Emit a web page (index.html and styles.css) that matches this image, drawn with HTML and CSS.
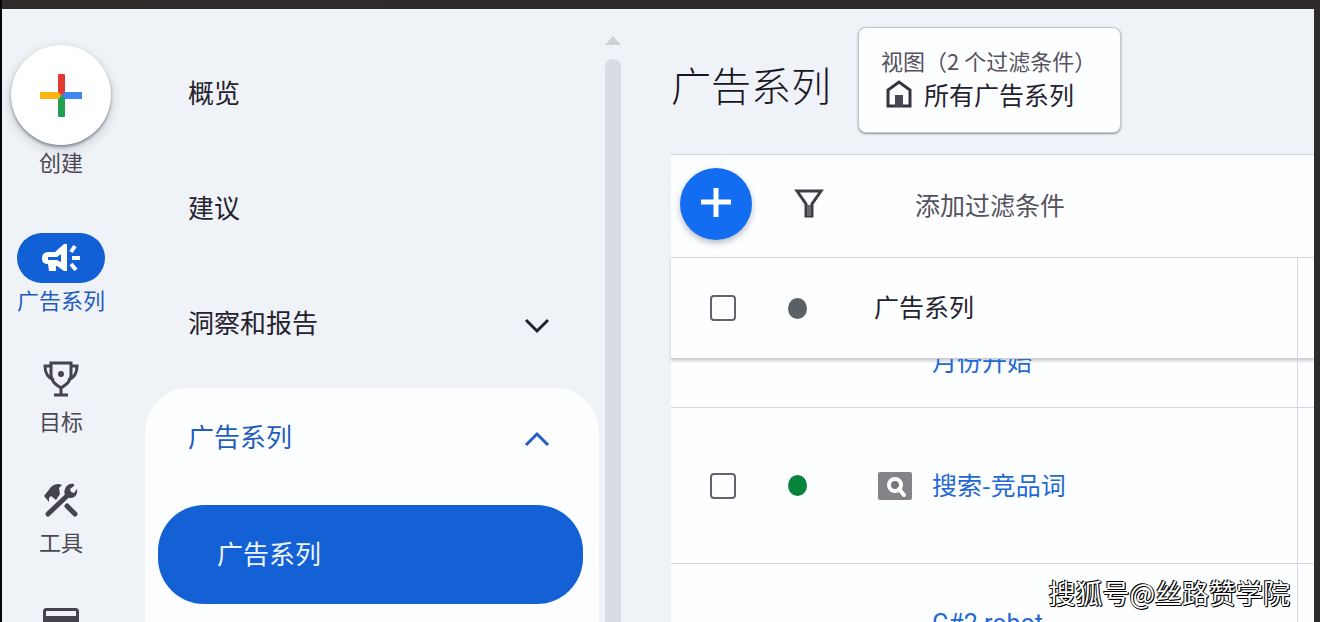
FILE: index.html
```html
<!DOCTYPE html>
<html lang="zh-CN">
<head>
<meta charset="utf-8">
<meta name="viewport" content="width=device-width, initial-scale=1">
<title>广告系列</title>
<link rel="stylesheet" href="styles.css">
</head>
<body>
<div class="app">
  <nav class="rail">
    <button class="rail-item create" type="button">
      <span class="create-disc">
        <svg width="44" height="44" viewBox="0 0 44 44"><path fill="#e23b35" d="M19 2q0-1 1-1h5q1 0 1 1v20l-7 2z"/><path fill="#fbb50f" d="M1 19h18l3 3-3 4H1z"/><path fill="#4285f0" d="M26 19h17v7H25l-3-3z"/><path fill="#20a152" d="M19 26l4-4 3 4v17q0 1-1 1h-5q-1 0-1-1z"/></svg>
      </span>
      <span class="rail-label">创建</span>
    </button>
    <a class="rail-item active" href="#">
      <span class="rail-icon pill">
        <svg width="40" height="32" viewBox="0 0 40 32"><path fill="#fff" d="M8 10h6l9-8h3v27h-3l-7-5h-1v5H8l-1-7c-4 0-6-2-6-5 0-5 2-7 7-7z"/><path fill="#1260d6" d="M7 15h9l4-3v8l-4-2H7z"/><path d="M30 10l4-6M31 16h8M30 22l5 6" stroke="#fff" stroke-width="4"/></svg>
      </span>
      <span class="rail-label">广告系列</span>
    </a>
    <a class="rail-item" href="#">
      <span class="rail-icon">
        <svg width="38" height="36" viewBox="0 0 38 36" fill="none" stroke="#45434c" stroke-width="3"><path d="M9 2h20v12c0 6-4 9-10 13C13 23 9 20 9 14z"/><path d="M9 5H3c0 8 3 12 9 14M29 5h6c0 8-3 12-9 14"/><path d="M19 26v8M12 34h14"/><circle cx="19" cy="13" r="3" fill="#45434c" stroke="none"/></svg>
      </span>
      <span class="rail-label">目标</span>
    </a>
    <a class="rail-item" href="#">
      <span class="rail-icon">
        <svg width="36" height="34" viewBox="0 0 36 34"><path fill="#45434c" d="M1 13l7-9c3-3 8-4 11-2l-3 3 1 6-4 6-5-4-2 2v4z"/><path d="M5 31L26 11M24 23l8 8" fill="none" stroke="#45434c" stroke-width="5" stroke-linecap="round"/><path d="M31 3l-4 3 1 3 3 1 3-4c1 5-2 9-6 9-5 0-8-4-6-9 1-4 5-6 9-5z" fill="#45434c"/></svg>
      </span>
      <span class="rail-label">工具</span>
    </a>
    <a class="rail-item" href="#" aria-label="结算">
      <span class="rail-icon">
        <svg width="36" height="26" viewBox="0 0 36 26"><rect x="1.500" y="1.500" width="33" height="23" rx="2" fill="none" stroke="#45434c" stroke-width="3"/><path fill="#45434c" d="M2 8h32v6H2z"/></svg>
      </span>
    </a>
  </nav>

  <nav class="menu">
    <a class="menu-item" href="#">概览</a>
    <a class="menu-item" href="#">建议</a>
    <button class="menu-item" type="button">洞察和报告
      <svg class="chevron" width="26" height="16" viewBox="0 0 26 16"><path d="M2 2l11 11L24 2"/></svg>
    </button>
    <div class="group">
      <button class="menu-item group-head" type="button">广告系列
        <svg class="chevron" width="26" height="16" viewBox="0 0 26 16"><path d="M2 14L13 3l11 11"/></svg>
      </button>
      <a class="sub-item" href="#">广告系列</a>
    </div>
  </nav>

  <div class="scrollbar">
    <svg width="16" height="9" viewBox="0 0 16 9"><path fill="#cdd0d5" d="M8 0l8 9H0z"/></svg>
    <div class="thumb"></div>
  </div>

  <main class="main">
    <header class="head">
      <h1>广告系列</h1>
      <button class="view" type="button">
        <span class="view-sub">视图（2 个过滤条件）</span>
        <span class="view-name">
          <svg width="26" height="28" viewBox="0 0 26 28"><path d="M2 26V10l11-8 11 8v16z" fill="none" stroke="#35333f" stroke-width="3"/><path fill="#4a4652" d="M9 15h8v12H9z"/></svg>
          所有广告系列
        </span>
      </button>
    </header>
    <section class="panel">
      <div class="toolbar">
        <button class="fab" type="button" aria-label="新建">
          <svg width="32" height="32" viewBox="0 0 32 32"><path d="M16 0v29M1 14h30" stroke="#fff" stroke-width="5"/></svg>
        </button>
        <svg class="funnel" width="30" height="30" viewBox="0 0 30 30"><path d="M3 2h24L18 15v12h-6V15z" fill="none" stroke="#403d47" stroke-width="3"/><path fill="#6b6870" d="M13 16h4v11h-4z"/></svg>
        <input class="filter" type="text" aria-label="添加过滤条件" placeholder="添加过滤条件">
      </div>
      <table class="grid">
        <colgroup><col class="c-check"><col class="c-dot"><col><col class="c-end"></colgroup>
        <thead>
          <tr>
            <th class="check"><input type="checkbox" aria-label="全选"></th>
            <th><span class="dot"></span></th>
            <th class="label">广告系列</th>
            <th></th>
          </tr>
        </thead>
        <tbody>
          <tr class="row-first">
            <td></td><td></td>
            <td><div class="clip"><a href="#">月份开始</a></div></td>
            <td></td>
          </tr>
          <tr class="row">
            <td class="check"><input type="checkbox" aria-label="搜索-竞品词"></td>
            <td><span class="dot on"></span></td>
            <td><div class="name">
              <svg width="34" height="28" viewBox="0 0 34 28"><rect width="34" height="28" rx="2" fill="#858387"/><circle cx="17" cy="13" r="6" fill="#77757a" stroke="#fff" stroke-width="4"/><path d="M21 17l5 6" stroke="#fff" stroke-width="4" stroke-linecap="round"/></svg>
              <a href="#">搜索-竞品词</a></div></td>
            <td></td>
          </tr>
          <tr class="row row-last">
            <td></td><td></td>
            <td><div class="next"><a href="#">C#2 robot</a></div></td>
            <td></td>
          </tr>
        </tbody>
      </table>
    </section>
  </main>
</div>
<div class="watermark">搜狐号@丝路赞学院</div>
</body>
</html>
```
FILE: styles.css
```css
* { box-sizing: border-box; }

body {
  margin: 0;
  height: 100vh;
  overflow: hidden;
  padding: 9px 6px 0 2px;
  background: linear-gradient(to right, #05060c 2px, #2f2c2a 2px, #2f2a2c);
  font-family: "Noto Sans CJK SC", "Noto Sans", sans-serif;
  font-size: 25px;
  color: #24222e;
}

button {
  border: 0;
  padding: 0;
  background: none;
  font: inherit;
  color: inherit;
}

a { color: inherit; text-decoration: none; }

.app {
  display: flex;
  height: 100%;
  overflow: hidden;
  background: #eff2f6;
}

.rail {
  flex: none;
  width: 118px;
  padding-top: 36px;
  display: flex;
  flex-direction: column;
  gap: 35px;
}

.rail-item {
  flex: none;
  display: flex;
  flex-direction: column;
  align-items: center;
  font-size: 22px;
  color: #4b4853;
}

.create { margin-bottom: 17px; }

.create-disc {
  width: 100px;
  height: 100px;
  border-radius: 50%;
  background: #fff;
  box-shadow: 0 2px 3px rgba(40, 44, 54, .45), 0 4px 12px rgba(40, 44, 54, .2);
  display: grid;
  place-items: center;
}

.rail-icon {
  height: 50px;
  display: grid;
  place-items: center;
}

.pill {
  width: 88px;
  border-radius: 25px;
  background: #1260d6;
}

.rail-label {
  padding-bottom: 4px;
  line-height: 32px;
}

.active .rail-label { color: #245dbd; }

.menu {
  flex: none;
  width: 454px;
  margin-left: 25px;
  padding-top: 27px;
  display: flex;
  flex-direction: column;
  font-size: 26px;
}

.menu-item {
  flex: none;
  height: 115px;
  padding: 0 49px 4px 43px;
  display: flex;
  align-items: center;
  justify-content: space-between;
}

.chevron {
  margin-top: 8px;
  fill: none;
  stroke: currentColor;
  stroke-width: 3;
}

.group {
  flex: 1 0 auto;
  margin-top: 7px;
  border-radius: 44px 44px 0 0;
  background: #fdfeff;
}

.group-head {
  width: 100%;
  height: 98px;
  color: #245dbd;
}

.sub-item {
  height: 99px;
  margin: 19px 16px 19px 13px;
  padding: 0 0 4px 59px;
  border-radius: 46px;
  display: flex;
  align-items: center;
  background: #1461d5;
  color: #eef5ff;
}

.scrollbar {
  flex: none;
  width: 16px;
  margin-left: 6px;
  padding-top: 27px;
  display: flex;
  flex-direction: column;
  gap: 14px;
}

.thumb {
  flex: 1;
  border-radius: 8px 8px 0 0;
  background: #d8dce4;
}

.main {
  flex: 1;
  min-width: 0;
  margin-left: 50px;
}

.head {
  display: flex;
  align-items: center;
  gap: 27px;
  height: 145px;
  padding-bottom: 3px;
}

h1 {
  margin: 8px 0 0;
  font-size: 40px;
  font-weight: 300;
  color: #17151f;
  white-space: nowrap;
}

.view {
  height: 106px;
  padding: 0 24px 6px 22px;
  border: 1px solid #c3c6cc;
  border-radius: 8px;
  background: #fdfeff;
  box-shadow: 0 1px 2px rgba(50, 54, 64, .5);
  display: flex;
  flex-direction: column;
  justify-content: center;
  text-align: left;
  white-space: nowrap;
}

.view-sub {
  font-size: 22px;
  line-height: 34px;
  color: #55525e;
}

.view-name {
  display: flex;
  align-items: center;
  gap: 12px;
  padding-left: 5px;
  line-height: 34px;
}

.panel {
  border-top: 1px solid #d3d6dc;
  background: #fdfeff;
}

.toolbar {
  display: flex;
  align-items: center;
  height: 103px;
  padding: 0 9px 4px;
  border-bottom: 1px solid #d3d6dc;
}

.fab {
  width: 72px;
  height: 72px;
  border-radius: 50%;
  background: #136df0;
  box-shadow: 0 3px 6px rgba(60, 60, 80, .35);
  display: grid;
  place-items: center;
}

.funnel { margin-left: 42px; }

.filter {
  flex: 1;
  min-width: 0;
  margin-left: 91px;
  padding: 0;
  border: 0;
  background: none;
  font: inherit;
}

.filter::placeholder { color: #55525e; opacity: 1; }

.grid {
  width: 100%;
  table-layout: fixed;
  border-collapse: separate;
  border-spacing: 0;
}

.c-check { width: 117px; }
.c-dot { width: 86px; }
.c-end { width: 17px; }

thead tr { box-shadow: 0 2px 3px rgba(60, 64, 74, .25); }

th, td {
  padding: 0;
  border-bottom: 1px solid #d3d6dc;
  text-align: left;
  vertical-align: middle;
  font-weight: 400;
}

th:last-child, td:last-child { border-left: 1px solid #d3d6dc; }

th {
  height: 101px;
  border-bottom-color: #c9ccd2;
}

td a { color: #2468d4; }

.check { padding-left: 39px; }
.label { padding-bottom: 4px; }

input[type="checkbox"] {
  appearance: none;
  display: block;
  width: 26px;
  height: 26px;
  margin: 0;
  border: 2px solid #65626b;
  border-radius: 4px;
}

.dot {
  display: block;
  width: 19px;
  height: 21px;
  border-radius: 50%;
  background: #596167;
}

.dot.on { background: #07833b; }

.clip {
  height: 48px;
  overflow: hidden;
  padding-left: 58px;
}

.clip a {
  display: block;
  margin-top: -12px;
  line-height: 26px;
}

.row td { height: 156px; }

.name {
  display: flex;
  align-items: center;
  gap: 20px;
  padding-left: 4px;
}

.name a { padding-bottom: 4px; }

.row-last td { vertical-align: top; }

.next {
  padding: 42px 0 0 58px;
  font-family: Roboto, sans-serif;
  line-height: 36px;
}

.watermark {
  position: absolute;
  right: 30px;
  bottom: 10px;
  font-size: 27px;
  line-height: 38px;
  color: #fff;
  text-shadow: -1px -1px 0 #000, 1px 1px 0 #000, 1px 0 0 #000, 0 1px 0 #000;
}
```
